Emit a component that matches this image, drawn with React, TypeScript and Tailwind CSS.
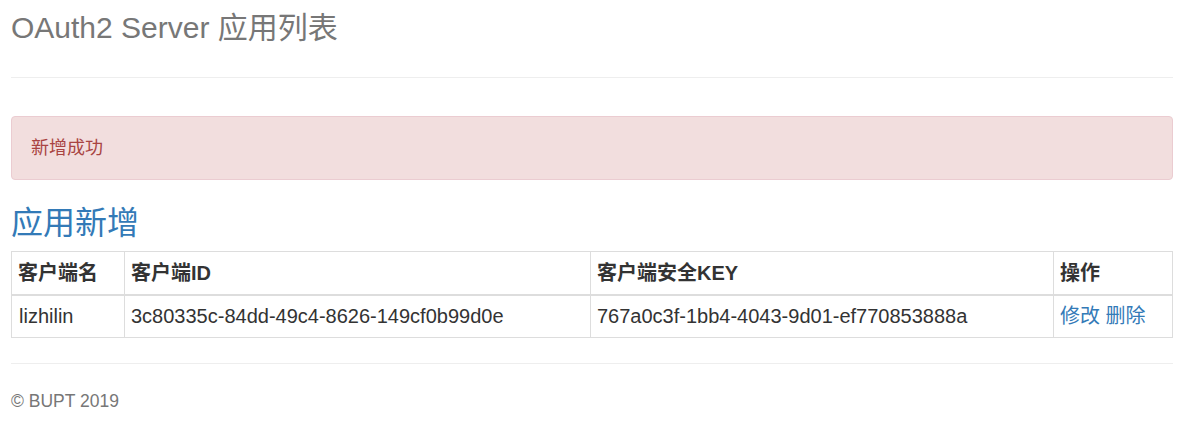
import React from 'react';

const apps = [
  {
    name: 'lizhilin',
    id: '3c80335c-84dd-49c4-8626-149cf0b99d0e',
    secret: '767a0c3f-1bb4-4043-9d01-ef770853888a',
  },
];

const font = { fontFamily: '"Liberation Sans", "Noto Sans CJK SC", sans-serif' };

const App = () => {
  return (
    <div className="min-h-screen bg-white pl-[11px] pr-[21px] text-[#333]" style={font}>
      {/* 标题 */}
      <h1 className="pt-[11px] text-[30px] font-normal leading-[33px] text-[#777]">OAuth2 Server 应用列表</h1>
      <hr className="mt-[33px] border-0 border-t border-[#eee]" />

      {/* 提示 */}
      <div className="mt-[38px] rounded-[4px] border border-[#ebccd1] bg-[#f2dede] px-[19px] py-[18px] text-[18px] leading-[26px] text-[#a94442]">
        新增成功
      </div>

      <h2 className="mt-[25px] text-[32px] font-normal leading-[36px] text-[#337ab7]">应用新增</h2>

      {/* 应用表格 */}
      <table className="mt-[10px] w-full table-fixed border-collapse border border-[#ddd] text-[20px]">
        <colgroup>
          <col className="w-[113px]" />
          <col className="w-[466px]" />
          <col className="w-[463px]" />
          <col />
        </colgroup>
        <thead>
          <tr>
            <th className="border border-b-2 border-[#ddd] px-[6px] py-[8px] text-left font-bold leading-[26px]">客户端名</th>
            <th className="border border-b-2 border-[#ddd] px-[6px] py-[8px] text-left font-bold leading-[26px]">客户端ID</th>
            <th className="border border-b-2 border-[#ddd] px-[6px] py-[8px] text-left font-bold leading-[26px]">客户端安全KEY</th>
            <th className="border border-b-2 border-[#ddd] px-[6px] py-[8px] text-left font-bold leading-[26px]">操作</th>
          </tr>
        </thead>
        <tbody>
          {apps.map((a) => (
            <tr key={a.id}>
              <td className="border border-[#ddd] px-[7px] py-[8px] leading-[25px]">{a.name}</td>
              <td className="border border-[#ddd] px-[6px] py-[8px] leading-[25px]">{a.id}</td>
              <td className="border border-[#ddd] px-[6px] py-[8px] leading-[25px]">{a.secret}</td>
              <td className="border border-[#ddd] px-[6px] py-[8px] leading-[25px]">
                <a href="#" className="text-[#337ab7]">修改</a>{' '}
                <a href="#" className="text-[#337ab7]">删除</a>
              </td>
            </tr>
          ))}
        </tbody>
      </table>

      <hr className="mt-[25px] border-0 border-t border-[#eee]" />
      <footer className="mt-[24px] text-[17.5px] leading-[26px] text-[#777]">© BUPT 2019</footer>
    </div>
  );
};

export default App;
